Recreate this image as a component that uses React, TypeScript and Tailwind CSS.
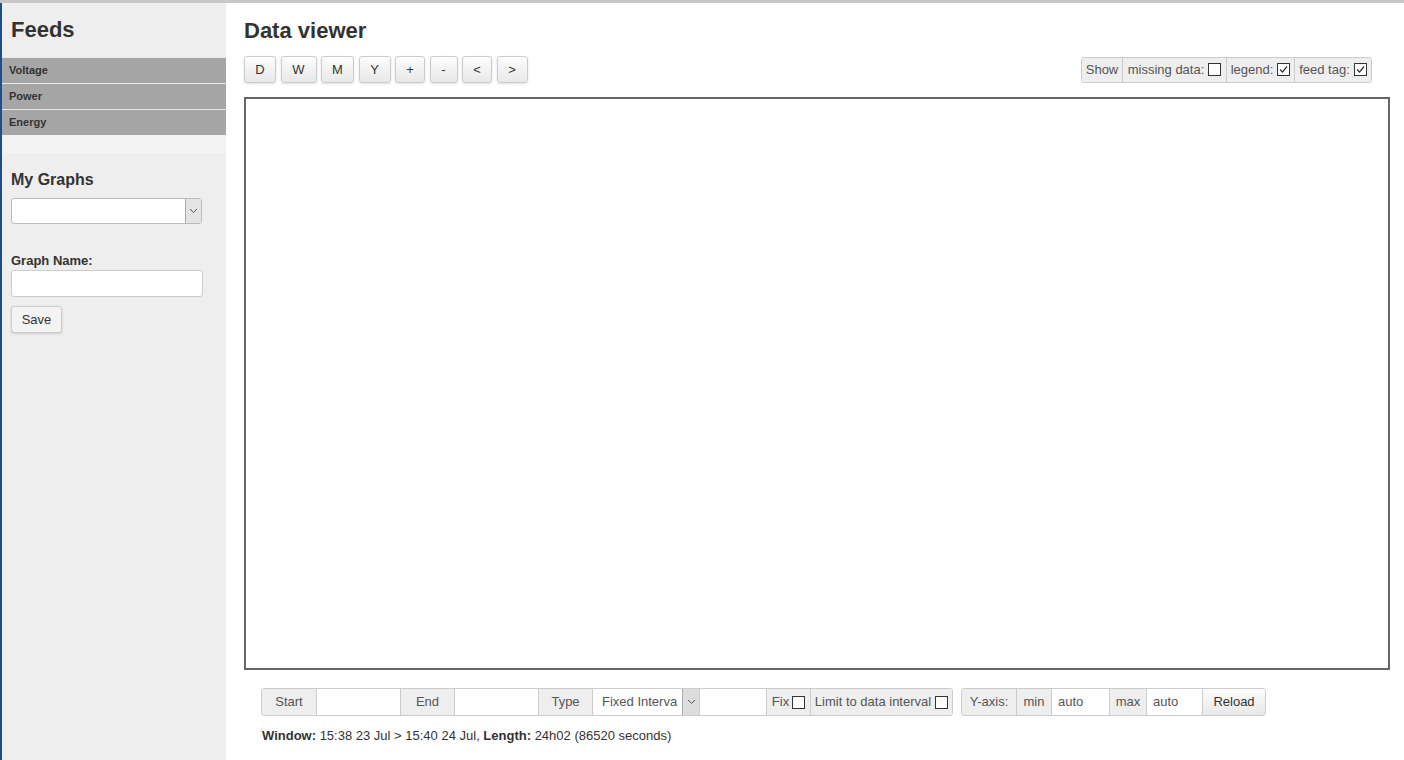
import React from "react"

const feeds = ["Voltage", "Power", "Energy"]
const ranges = [
  { label: "D", w: "w-[32px]" },
  { label: "W", w: "w-[36px]" },
  { label: "M", w: "w-[33px]" },
  { label: "Y", w: "w-[32px]" },
  { label: "+", w: "w-[30px]" },
  { label: "-", w: "w-[28px]" },
  { label: "<", w: "w-[30px]" },
  { label: ">", w: "w-[31px]" },
]

const Check = ({ checked }: { checked?: boolean }) => (
  <svg width="13" height="13" viewBox="0 0 13 13" className="inline-block shrink-0">
    <rect x="0.5" y="0.5" width="12" height="12" fill="#fff" stroke="#333" />
    {checked && <path d="M3 6.5 L5.5 9 L10 3.5" fill="none" stroke="#333" strokeWidth="1.2" />}
  </svg>
)

const Addon = ({ children, className = "" }: { children: React.ReactNode; className?: string }) => (
  <div className={`flex items-center justify-center whitespace-nowrap shrink-0 bg-[#eeeeee] border-r border-[#cccccc] px-[6px] text-[#555] ${className}`}>
    {children}
  </div>
)

const Field = ({ className = "", value = "" }: { className?: string; value?: string }) => (
  <div className={`flex items-center shrink-0 bg-white border-r border-[#cccccc] px-[6px] text-[#555] ${className}`}>{value}</div>
)

export default function App() {
  return (
    <div
      className="w-[1404px] h-[760px] bg-white flex overflow-hidden border-t-[3px] border-[#c8c8c8] text-[#333]"
      style={{ fontFamily: '"Liberation Sans", Arial, sans-serif' }}
    >
      <div className="w-[2px] bg-[#1c4f8c] shrink-0" />
      <aside className="w-[224px] shrink-0 bg-[#eeeeee] flex flex-col">
        <h2 className="text-[22px] font-bold leading-none px-[9px] pt-[16px] h-[54px]">Feeds</h2>
        <div className="flex flex-col">
          {feeds.map((f) => (
            <div key={f} className="h-[26px] bg-[#a6a6a6] border-t border-[#e8e8e8] px-[7px] flex items-center text-[11px] font-bold text-[#333]">
              {f}
            </div>
          ))}
        </div>
        <div className="h-[18px] bg-[#f3f3f3]" />
        <div className="px-[9px]">
          <h3 className="text-[16px] font-bold mt-[19px] leading-none">My Graphs</h3>
          <div className="mt-[10px] w-[191px] h-[26px] bg-white border border-[#bbbbbb] rounded-[3px] flex justify-end">
            <div className="w-[16px] h-full bg-[#e4e4e4] border-l border-[#aaaaaa] flex items-center justify-center">
              <svg width="9" height="6" viewBox="0 0 9 6">
                <path d="M1 1 L4.5 4.5 L8 1" fill="none" stroke="#555" strokeWidth="1" />
              </svg>
            </div>
          </div>
          <div className="text-[13px] font-bold mt-[30px] leading-none">Graph Name:</div>
          <div className="mt-[3px] w-[192px] h-[27px] bg-white border border-[#cccccc] rounded-[3px]" />
          <button className="mt-[9px] w-[51px] h-[27px] bg-[#f3f3f3] border border-[#cccccc] rounded-[3px] text-[13px] text-[#333] shadow-sm">
            Save
          </button>
        </div>
      </aside>

      <main className="flex-1 pl-[18px] pr-[14px] flex flex-col">
        <h1 className="text-[22px] font-bold leading-none mt-[17px]">Data viewer</h1>
        <div className="flex items-center justify-between mt-[14px] pr-[18px]">
          <div className="flex gap-[4.5px]">
            {ranges.map((r) => (
              <button
                key={r.label}
                className={`${r.w} h-[27px] bg-gradient-to-b from-[#fdfdfd] to-[#e8e8e8] border border-[#cccccc] rounded-[3px] text-[13px] text-[#333] shadow-sm`}
              >
                {r.label}
              </button>
            ))}
          </div>
          <div className="flex h-[26px] border border-[#cccccc] rounded-[3px] overflow-hidden text-[13px] bg-[#eeeeee]">
            <Addon className="w-[41px] px-0">Show</Addon>
            <Addon className="w-[104px] gap-[4px] px-0">missing data: <Check /></Addon>
            <Addon className="w-[68px] gap-[4px] px-0">legend: <Check checked /></Addon>
            <div className="w-[76px] flex items-center justify-center whitespace-nowrap gap-[4px] text-[#555]">feed tag: <Check checked /></div>
          </div>
        </div>
        <div className="mt-[14px] w-[1146px] h-[573px] border-2 border-[#666666]" />

        <div className="flex mt-[18px] ml-[17px] text-[13px] h-[28px]">
          <div className="flex border border-[#cccccc] rounded-[3px] overflow-hidden">
            <Addon className="w-[55px]">Start</Addon>
            <Field className="w-[84px]" />
            <Addon className="w-[54px]">End</Addon>
            <Field className="w-[84px]" />
            <Addon className="w-[54px]">Type</Addon>
            <div className="flex items-center w-[107px] bg-white border-r border-[#cccccc] text-[#555]">
              <span className="pl-[9px] flex-1 overflow-hidden whitespace-nowrap">Fixed Interva</span>
              <div className="w-[17px] h-full bg-[#dddddd] border-l border-[#aaaaaa] flex items-center justify-center">
                <svg width="9" height="6" viewBox="0 0 9 6">
                  <path d="M1 1 L4.5 4.5 L8 1" fill="none" stroke="#555" strokeWidth="1" />
                </svg>
              </div>
            </div>
            <Field className="w-[67px]" />
            <Addon className="w-[44px] gap-[3px] px-[4px]">Fix <Check /></Addon>
            <div className="w-[141px] flex items-center justify-center whitespace-nowrap gap-[4px] bg-[#eeeeee] text-[#555]">Limit to data interval <Check /></div>
          </div>
          <div className="ml-[8px] flex border border-[#cccccc] rounded-[3px] overflow-hidden">
            <Addon className="w-[55px]">Y-axis:</Addon>
            <Addon className="w-[35px]">min</Addon>
            <Field className="w-[58px]" value="auto" />
            <Addon className="w-[37px]">max</Addon>
            <Field className="w-[56px]" value="auto" />
            <div className="flex items-center justify-center w-[62px] bg-gradient-to-b from-[#fdfdfd] to-[#e8e8e8] text-[#333]">Reload</div>
          </div>
        </div>
        <div className="mt-[10px] ml-[18px] text-[13px] text-[#333]">
          <b>Window:</b> 15:38 23 Jul &gt; 15:40 24 Jul, <b>Length:</b> 24h02 (86520 seconds)
        </div>
      </main>
    </div>
  )
}
